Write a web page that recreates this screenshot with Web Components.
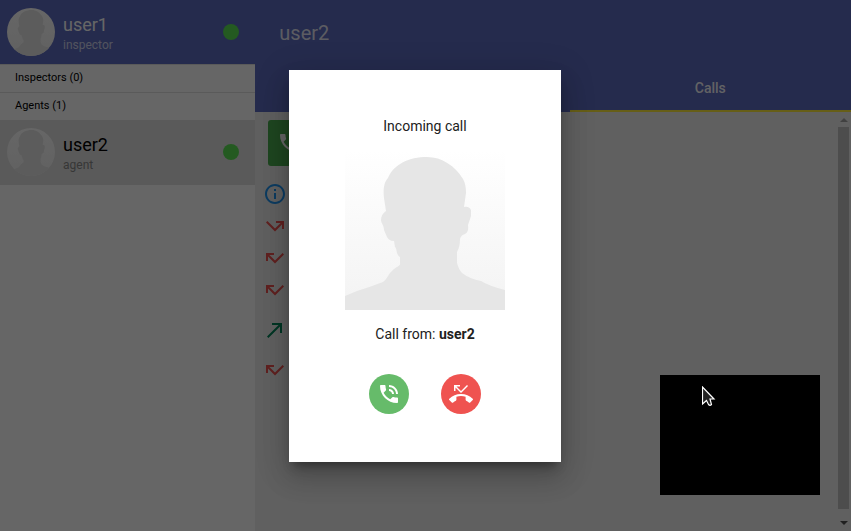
<!DOCTYPE html>
<html lang="en">
<head>
<meta charset="utf-8">
<title>Calls</title>
<style>
html, body { height: 100%; margin: 0; }
body { font: 14px/20px Roboto, "Noto Sans", sans-serif; color: #212121; overflow: hidden; }
</style>
</head>
<body>
<call-app></call-app>
<script>
const define = (name, html, setup) => {
  const template = document.createElement('template');
  template.innerHTML = html;
  customElements.define(name, class extends HTMLElement {
    constructor() {
      super();
      this.attachShadow({ mode: 'open' }).append(template.content.cloneNode(true));
    }
    connectedCallback() { if (setup) setup(this, this.shadowRoot); }
  });
};

const ICONS = {
  call: 'M6.62 10.79c1.44 2.83 3.76 5.14 6.59 6.59l2.2-2.2c.27-.27.67-.36 1.02-.24 1.12.37 2.33.57 3.57.57.55 0 1 .45 1 1V20c0 .55-.45 1-1 1-9.39 0-17-7.61-17-17 0-.55.45-1 1-1h3.5c.55 0 1 .45 1 1 0 1.25.2 2.45.57 3.57.11.35.03.74-.25 1.02l-2.2 2.2z',
  talk: 'M20 15.5c-1.25 0-2.45-.2-3.57-.57-.35-.11-.74-.03-1.02.24l-2.2 2.2c-2.83-1.44-5.15-3.75-6.59-6.59l2.2-2.21c.28-.26.36-.65.25-1C8.7 6.45 8.5 5.25 8.5 4c0-.55-.45-1-1-1H4c-.55 0-1 .45-1 1 0 9.39 7.61 17 17 17 .55 0 1-.45 1-1v-3.5c0-.55-.45-1-1-1zM19 12h2c0-4.97-4.03-9-9-9v2c3.87 0 7 3.13 7 7zm-4 0h2c0-2.76-2.24-5-5-5v2c1.66 0 3 1.34 3 3z',
  reject: 'M6.5 5.5L12 11l7-7-1-1-6 6-4.5-4.5H11V3H5v6h1.5V5.5zm17.21 11.17C20.66 13.78 16.54 12 12 12 7.46 12 3.34 13.78.29 16.67c-.18.18-.29.43-.29.71 0 .28.11.53.29.71l2.48 2.48c.18.18.43.29.71.29.27 0 .52-.11.7-.28.79-.74 1.69-1.36 2.66-1.85.33-.16.56-.5.56-.9v-3.1c1.45-.48 3-.73 4.6-.73 1.6 0 3.15.25 4.6.72v3.1c0 .39.23.74.56.9.98.49 1.87 1.12 2.67 1.85.18.18.43.28.7.28.28 0 .53-.11.71-.29l2.48-2.48c.18-.18.29-.43.29-.71 0-.28-.12-.53-.3-.71z',
  info: 'M11 17h2v-6h-2v6zm1-15C6.48 2 2 6.48 2 12s4.48 10 10 10 10-4.48 10-10S17.52 2 12 2zm0 18c-4.41 0-8-3.59-8-8s3.59-8 8-8 8 3.59 8 8-3.59 8-8 8zM11 9h2V7h-2v2z',
  missed: 'M19.59 7L12 14.59 6.41 9H11V7H3v8h2v-4.59l7 7 9-9z',
  unanswered: 'M3 8.41l9 9 7-7V15h2V7h-8v2h4.59L12 14.59 4.41 7 3 8.41z',
  made: 'M9 5v2h6.59L4 18.59 5.41 20 17 8.41V15h2V5z'
};

define('call-icon', `
<style>:host { display: block; width: 24px; height: 24px; } svg { display: block; width: 100%; height: 100%; fill: currentColor; }</style>
<svg viewBox="0 0 24 24" aria-hidden="true"><path/></svg>`,
(host, root) => root.querySelector('path').setAttribute('d', ICONS[host.getAttribute('name')]));

define('user-avatar', `
<style>:host { display: block; overflow: hidden; } svg { display: block; width: 100%; height: 100%; }</style>
<svg viewBox="0 0 160 160" aria-hidden="true">
  <defs><linearGradient id="g" x1="0" y1="0" x2="0" y2="1"><stop offset="0" stop-color="#fff"/><stop offset="1" stop-color="#f3f3f3"/></linearGradient></defs>
  <rect width="160" height="160" fill="url(#g)"/>
  <path fill="#e6e6e6" d="M0 160V146L12 141Q25 137 38 132C43 128 44 123 47 121C50 117 56 116 55 113L55 107C51 105 52 98 50 97L49 91C45 91 43 89 42 87L39 80C39 75 36 73 36 70C36 66 38 63 41 61L39 48C38 40 39 32 43 28C49 14 64 7 82 7C97 7 110 16 118 29Q121 34 121 43L119 57Q124 56 126 60L126 66L123 75Q124 82 120 84Q116 85 115 89Q115 97 112 102L112 113Q114 120 117 123Q125 129 136 131Q144 136 160 140V160Z"/>
</svg>`);

define('user-row', `
<style>
:host { display: flex; align-items: center; box-sizing: border-box; height: 64px; padding: 0 16px 0 7px; gap: 8px; }
:host([kind="self"]) { background: #5c6bc0; color: #fff; --role: rgba(255,255,255,.7); }
:host([kind="peer"]) { background: #e0e0e0; color: #000; --role: #8a8a8a; border-bottom: 1px solid #e0e0e0; height: 65px; }
user-avatar { width: 48px; height: 48px; border-radius: 50%; }
.text { flex: 1; padding-top: 4px; }
.name { font-size: 18px; line-height: 22px; }
.role { font-size: 12px; line-height: 18px; color: var(--role); }
.dot { width: 16px; height: 16px; border-radius: 50%; background: #5ae054; }
</style>
<user-avatar></user-avatar>
<div class="text"><div class="name"><slot></slot></div><div class="role"><slot name="role"></slot></div></div>
<span class="dot" role="img" aria-label="online"></span>`);

define('group-title', `
<style>:host { display: block; box-sizing: border-box; height: 28px; padding: 0 15px; border-top: 1px solid #e0e0e0; font-size: 11px; line-height: 25px; color: #000; }</style>
<slot></slot>`);

define('side-bar', `
<style>:host { display: block; background: #fff; }</style>
<user-row kind="self">user1<span slot="role">inspector</span></user-row>
<group-title>Inspectors (0)</group-title>
<group-title>Agents (1)</group-title>
<user-row kind="peer">user2<span slot="role">agent</span></user-row>`);

define('main-header', `
<style>
:host { display: block; background: #5c6bc0; color: #fff; }
h1 { margin: 0; padding: 0 24px; font-size: 20px; font-weight: 400; line-height: 66px; height: 64px; color: rgba(255,255,255,.85); }
nav { display: grid; grid-template-columns: 315fr 282fr; height: 48px; }
button { border: 0; border-bottom: 2px solid transparent; padding: 2px 0 0; background: none; font: 500 14px/44px Roboto, sans-serif; color: rgba(255,255,255,.95); }
button[aria-selected="true"] { border-color: #ffeb3b; }
</style>
<h1>user2</h1>
<nav role="tablist"><button role="tab" aria-selected="false" aria-label="Chat"></button><button role="tab" aria-selected="true">Calls</button></nav>`);

define('scroll-bar', `
<style>
:host { display: flex; flex-direction: column; align-items: center; justify-content: space-between; box-sizing: border-box; width: 15px; padding: 6px 2px; background: #f1f1f1; }
i { border: 4px solid transparent; border-top: 0; border-bottom-color: #a3a3a3; }
i.down { border: 4px solid transparent; border-bottom: 0; border-top-color: #505050; }
.thumb { flex: 1; align-self: stretch; margin: 5px 0 12px; background: #c1c1c1; }
</style>
<i></i><div class="thumb"></div><i class="down"></i>`);

define('call-log', `
<style>
:host { display: block; padding: 8px; }
button { display: flex; align-items: center; height: 46px; margin: 0 5px; padding: 0 9px; width: 64px; border: 0; border-radius: 3px; background: #4caf50; color: #fff; }
ul { list-style: none; margin: 12px 0 0; padding: 0; }
li { display: flex; align-items: center; height: 32px; color: #ef5350; }
.info { color: #2196f3; }
.made { height: 48px; color: #00875a; }
</style>
<button aria-label="Call user2"><call-icon name="call"></call-icon></button>
<ul>
  <li class="info"><call-icon name="info"></call-icon></li>
  <li><call-icon name="unanswered"></call-icon></li>
  <li><call-icon name="missed"></call-icon></li>
  <li><call-icon name="missed"></call-icon></li>
  <li class="made"><call-icon name="made"></call-icon></li>
  <li><call-icon name="missed"></call-icon></li>
</ul>`);

define('call-dialog', `
<style>
:host { display: flex; flex-direction: column; align-items: center; box-sizing: border-box; padding: 46px 56px 48px; background: #fff;
  box-shadow: 0 16px 24px 2px rgba(0,0,0,.14), 0 6px 30px 5px rgba(0,0,0,.12), 0 8px 10px -5px rgba(0,0,0,.4); }
p { margin: 0; }
user-avatar { width: 160px; height: 160px; margin: 14px 0; }
.actions { display: flex; gap: 32px; margin-top: 30px; }
button { display: grid; place-items: center; width: 40px; height: 40px; padding: 0; border: 0; border-radius: 50%; color: #fff; background: #66bb6a; }
button.reject { background: #ef5350; }
</style>
<p>Incoming call</p>
<user-avatar></user-avatar>
<p>Call from: <b>user2</b></p>
<div class="actions">
  <button aria-label="Accept"><call-icon name="talk"></call-icon></button>
  <button class="reject" aria-label="Reject"><call-icon name="reject"></call-icon></button>
</div>`);

define('call-app', `
<style>
:host { display: grid; grid-template-columns: 30% 1fr; height: 100vh; position: relative; }
main { display: flex; flex-direction: column; min-width: 0; background: #f0f0f0; }
.body { display: flex; flex: 1; min-height: 0; }
call-log { flex: 1; }
.video { position: absolute; right: 31px; bottom: 36px; width: 160px; height: 120px; background: #000; }
.backdrop { position: absolute; inset: 0; display: grid; place-items: center; padding-right: 1px; background: rgba(0,0,0,.6); }
.cursor { position: absolute; right: 133px; bottom: 124px; width: 16px; height: 21px; }
</style>
<side-bar></side-bar>
<main>
  <main-header></main-header>
  <div class="body"><call-log></call-log><scroll-bar></scroll-bar></div>
</main>
<div class="video"></div>
<div class="backdrop"><call-dialog role="dialog" aria-modal="true" aria-label="Incoming call"></call-dialog></div>
<svg class="cursor" viewBox="0 0 16 21" aria-hidden="true"><path d="M.5 1V18L4.500 14.500L6.500 18.500Q8 20 9.500 18.500L8 13H12Z" fill="#222" stroke="#fff" stroke-width="1.200"/></svg>`);
</script>
</body>
</html>
